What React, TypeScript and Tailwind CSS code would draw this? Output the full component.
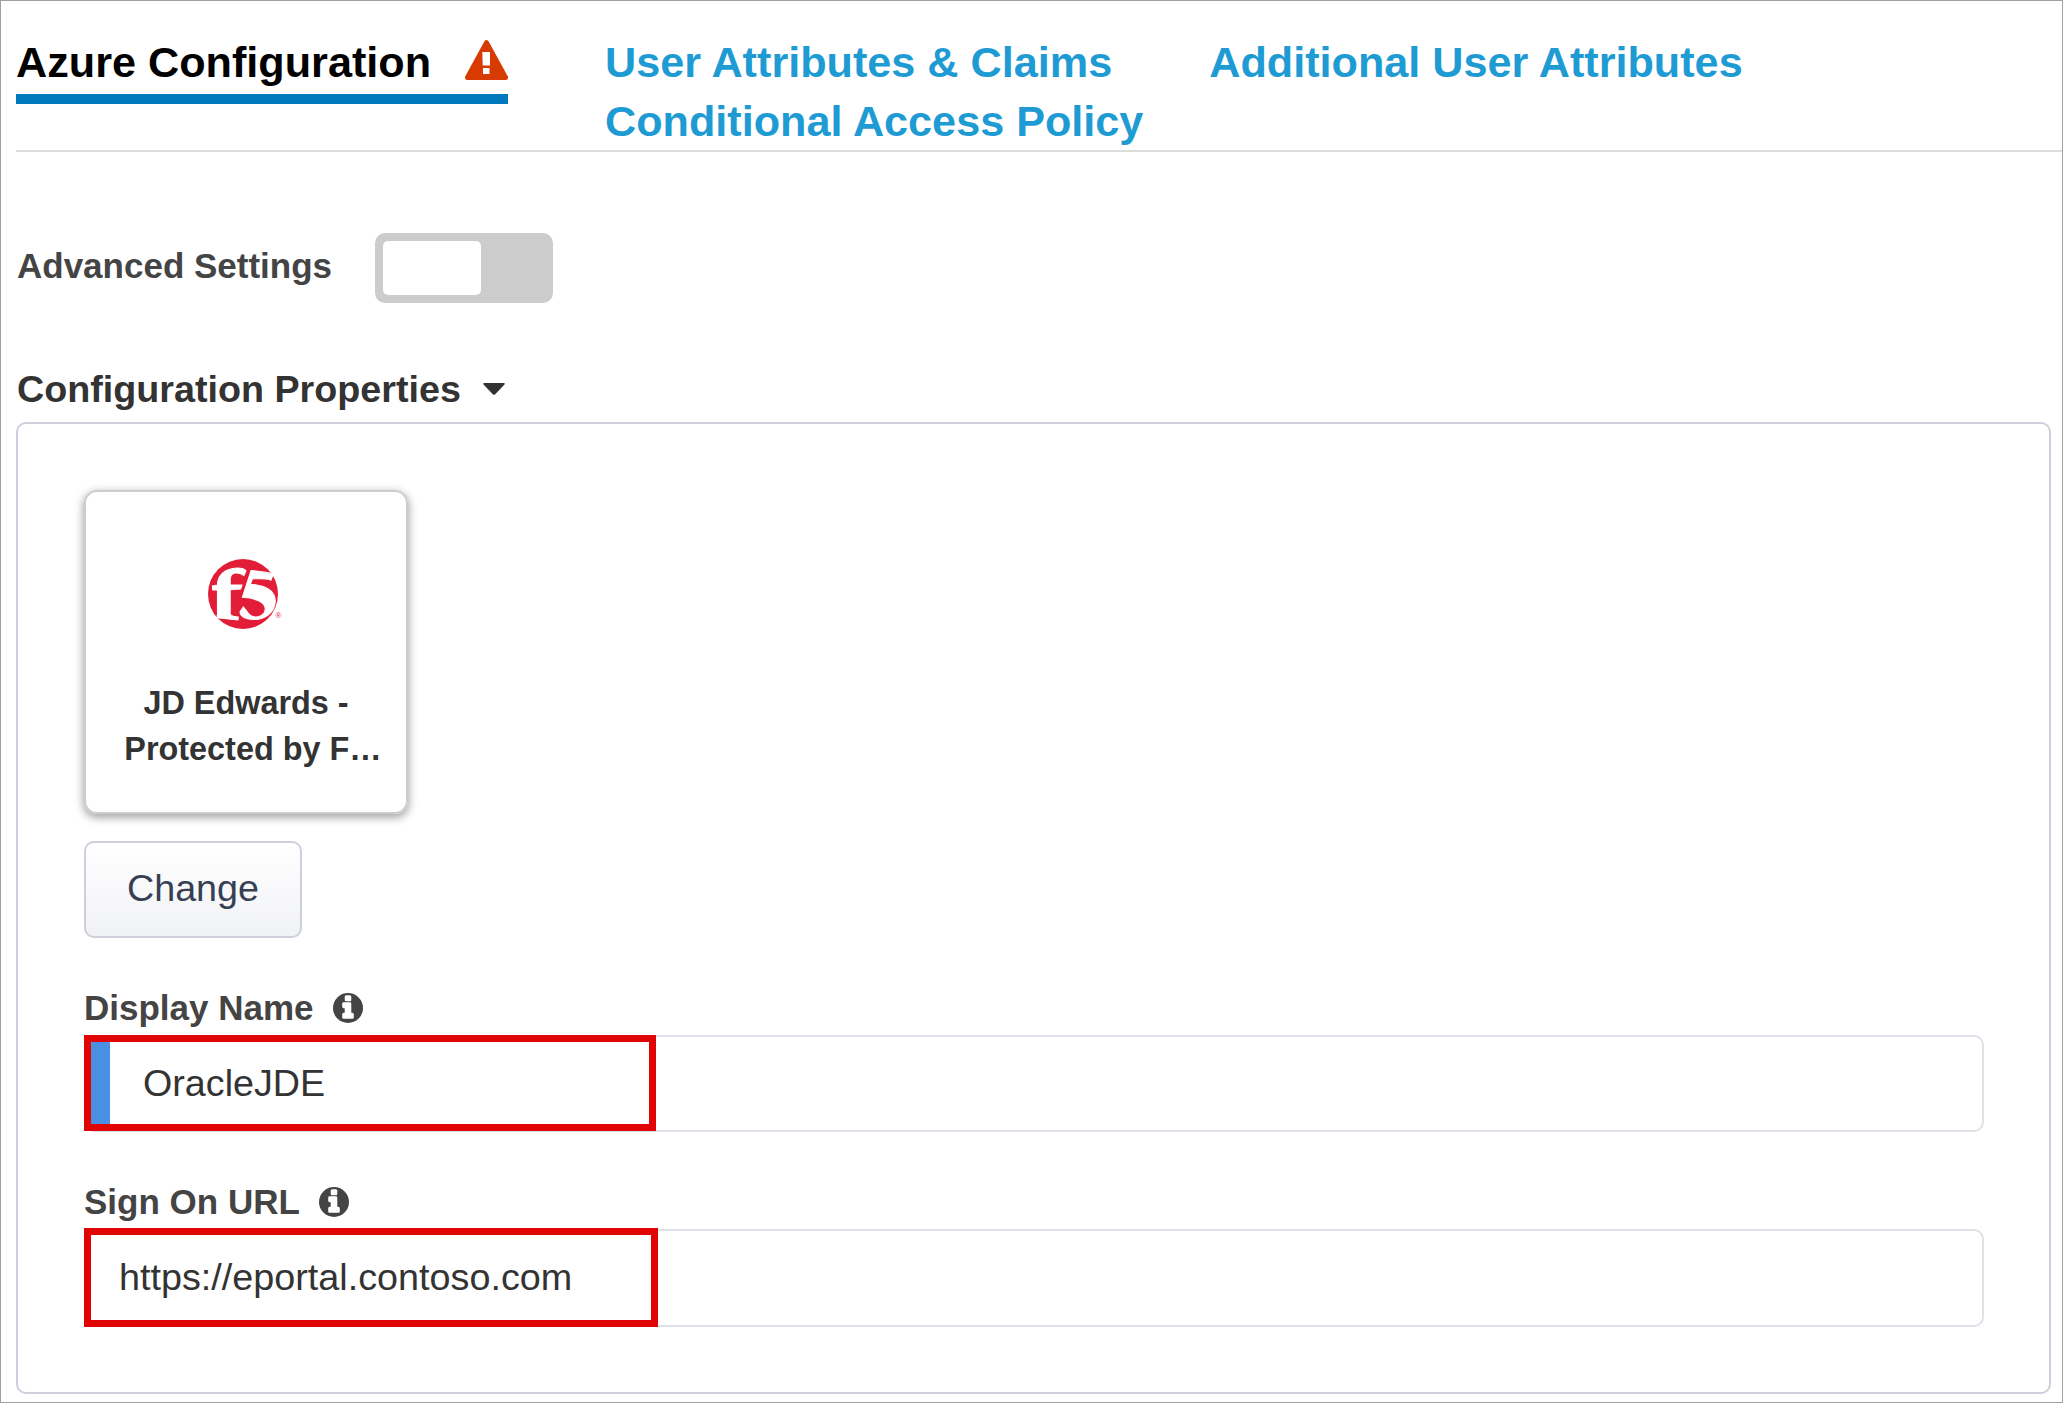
function WarningIcon() {
  return (
    <svg className="h-10 w-[43px]" viewBox="0 0 43 40">
      <path d="M21.500 2.600 40.500 37.500H2.500Z" fill="#d83b01" stroke="#d83b01" strokeWidth="5" strokeLinejoin="round" />
      <path d="M17.300 12h7.700v13.500h-7.300zM18 28h6.500v6H18z" fill="#fff" />
    </svg>
  );
}

function InfoIcon() {
  return (
    <svg className="size-[30px]" viewBox="0 0 1536 1536">
      <circle cx="768" cy="768" r="768" fill="#444" />
      <path
        d="M1024 1248v-160q0-14-9-23t-23-9h-96V544q0-14-9-23t-23-9H544q-14 0-23 9t-9 23v160q0 14 9 23t23 9h96v320h-96q-14 0-23 9t-9 23v160q0 14 9 23t23 9h448q14 0 23-9t9-23zM896 352V192q0-14-9-23t-23-9H672q-14 0-23 9t-9 23v160q0 14 9 23t23 9h192q14 0 23-9t9-23z"
        fill="#fff"
        stroke="#fff"
        strokeWidth="80"
      />
    </svg>
  );
}

function F5Logo() {
  return (
    <svg className="h-[70px] w-[70px]" viewBox="413 269 208 208">
      <circle cx="517" cy="373" r="104" fill="#e21d38" />
      <g fill="#fff" stroke="#fff" strokeWidth="3">
        <path d="M426 349 441 346C441 318 462 297 500 296C515 296 523 300 526 304L520 318C505 309 480 304 479 330V346H514L510 358 479 360V430C479 437 484 439 503 441L502 450 441 444 440 437Q442 436 441 428V360L427 361Z" />
        <path d="M541 303 590 309Q600 311 606 316L600 332Q590 326 545 328L539 344C577 347 613 360 613 395C612 425 585 449 550 449C525 449 508 440 508 426L518 411C530 425 535 441 556 441C572 440 583 430 583 418C583 395 550 385 515 383Z" />
      </g>
    </svg>
  );
}

function FieldLabel({ children }: { children: string }) {
  return (
    <div className="flex h-[46px] items-center gap-[19px] text-[35px] leading-[46px] font-bold text-[#444]">
      <span>{children}</span>
      <span className="pb-px">
        <InfoIcon />
      </span>
    </div>
  );
}

export default function App() {
  return (
    <div className="flex h-[1403px] w-[2063px] flex-col overflow-hidden border border-[#a0a0a0] bg-white pl-[15px] font-['Liberation_Sans',Arial,sans-serif] text-[#333]">
      <nav className="flex h-[151px] border-b-2 border-[#dcdcdc] pt-8 text-[43.200px] leading-[59px] font-bold">
        <div className="flex h-[71px] w-[492px] items-start justify-between border-b-[10px] border-[#0078be] text-black">
          <span>Azure Configuration</span>
          <span className="pt-[7px]">
            <WarningIcon />
          </span>
        </div>
        <div className="ml-[97px] flex flex-1 flex-wrap content-start gap-x-[97px] text-[#1f9bd4]">
          <a>User Attributes &amp; Claims</a>
          <a className="mr-[200px]">Additional User Attributes</a>
          <a>Conditional Access Policy</a>
        </div>
      </nav>

      <div className="mt-[81px] flex h-[70px] items-center">
        <span className="w-[359px] pb-1 pl-px text-[35px] leading-[46px] font-bold text-[#444]">Advanced Settings</span>
        <div className="flex h-[70px] w-[178px] items-center rounded-[10px] bg-[#ccc] px-2">
          <div className="h-[54px] w-[98px] rounded-[5px] bg-white" />
        </div>
      </div>

      <div className="mt-[61px] flex h-[50px] items-center gap-[22px] pl-px text-[37.700px] leading-[50px] font-bold">
        <span>Configuration Properties</span>
        <svg className="h-3 w-[22px]" viewBox="0 0 22 12" fill="#333">
          <path d="M1 0h20q1.500 .6.500 1.600L12 11.400q-1 .8-2 0L.5 1.600Q-.5.6 1 0z" />
        </svg>
      </div>

      <section className="mt-2 mr-[11px] flex h-[972px] flex-col rounded-[10px] border-2 border-[#cdd0dc] pr-[65px] pl-[66px] pt-[66px]">
        <div className="flex size-[324px] flex-col items-center rounded-[13px] border-2 border-[#ccc] pt-[67px] shadow-[0_3px_8px_1px_rgba(0,0,0,0.35)]">
          <div className="relative mr-[7px] size-[70px]">
            <F5Logo />
            <span className="absolute top-[52px] left-[68px] text-[8px] leading-[10px] text-[#e21d38]">®</span>
          </div>
          <div className="mt-[51px] text-center text-[32.400px] leading-[46px] font-bold">
            <p>JD Edwards -</p>
            <p className="-mr-[7px] pl-[7px]">Protected by F…</p>
          </div>
        </div>

        <button className="mt-[27px] h-[97px] w-[218px] rounded-[10px] border-2 border-[#cdd0dc] bg-linear-to-b from-white to-[#f1f2f6] pb-1 text-[37.700px] leading-[50px] text-[#363f54]">
          Change
        </button>

        <div className="mt-[47px]">
          <FieldLabel>Display Name</FieldLabel>
        </div>
        <div className="mt-1 flex h-[97px] rounded-[10px] border-2 border-[#dee2e8]">
          <div className="-mt-0.5 -ml-0.5 flex h-24 w-[572px] items-center border-[7px] border-[#e00404] text-[37.700px]">
            <span className="h-full w-[19px] bg-[#4a90e2]" />
            <span className="ml-[33px]">OracleJDE</span>
          </div>
        </div>

        <div className="mt-[47px]">
          <FieldLabel>Sign On URL</FieldLabel>
        </div>
        <div className="mt-1 flex h-[98px] rounded-[10px] border-2 border-[#dee2e8]">
          <div className="-mt-[3px] -ml-0.5 flex h-[99px] w-[574px] items-center border-[7px] border-[#e00404] pl-7 text-[37.750px]">
            https://eportal.contoso.com
          </div>
        </div>
      </section>
    </div>
  );
}
